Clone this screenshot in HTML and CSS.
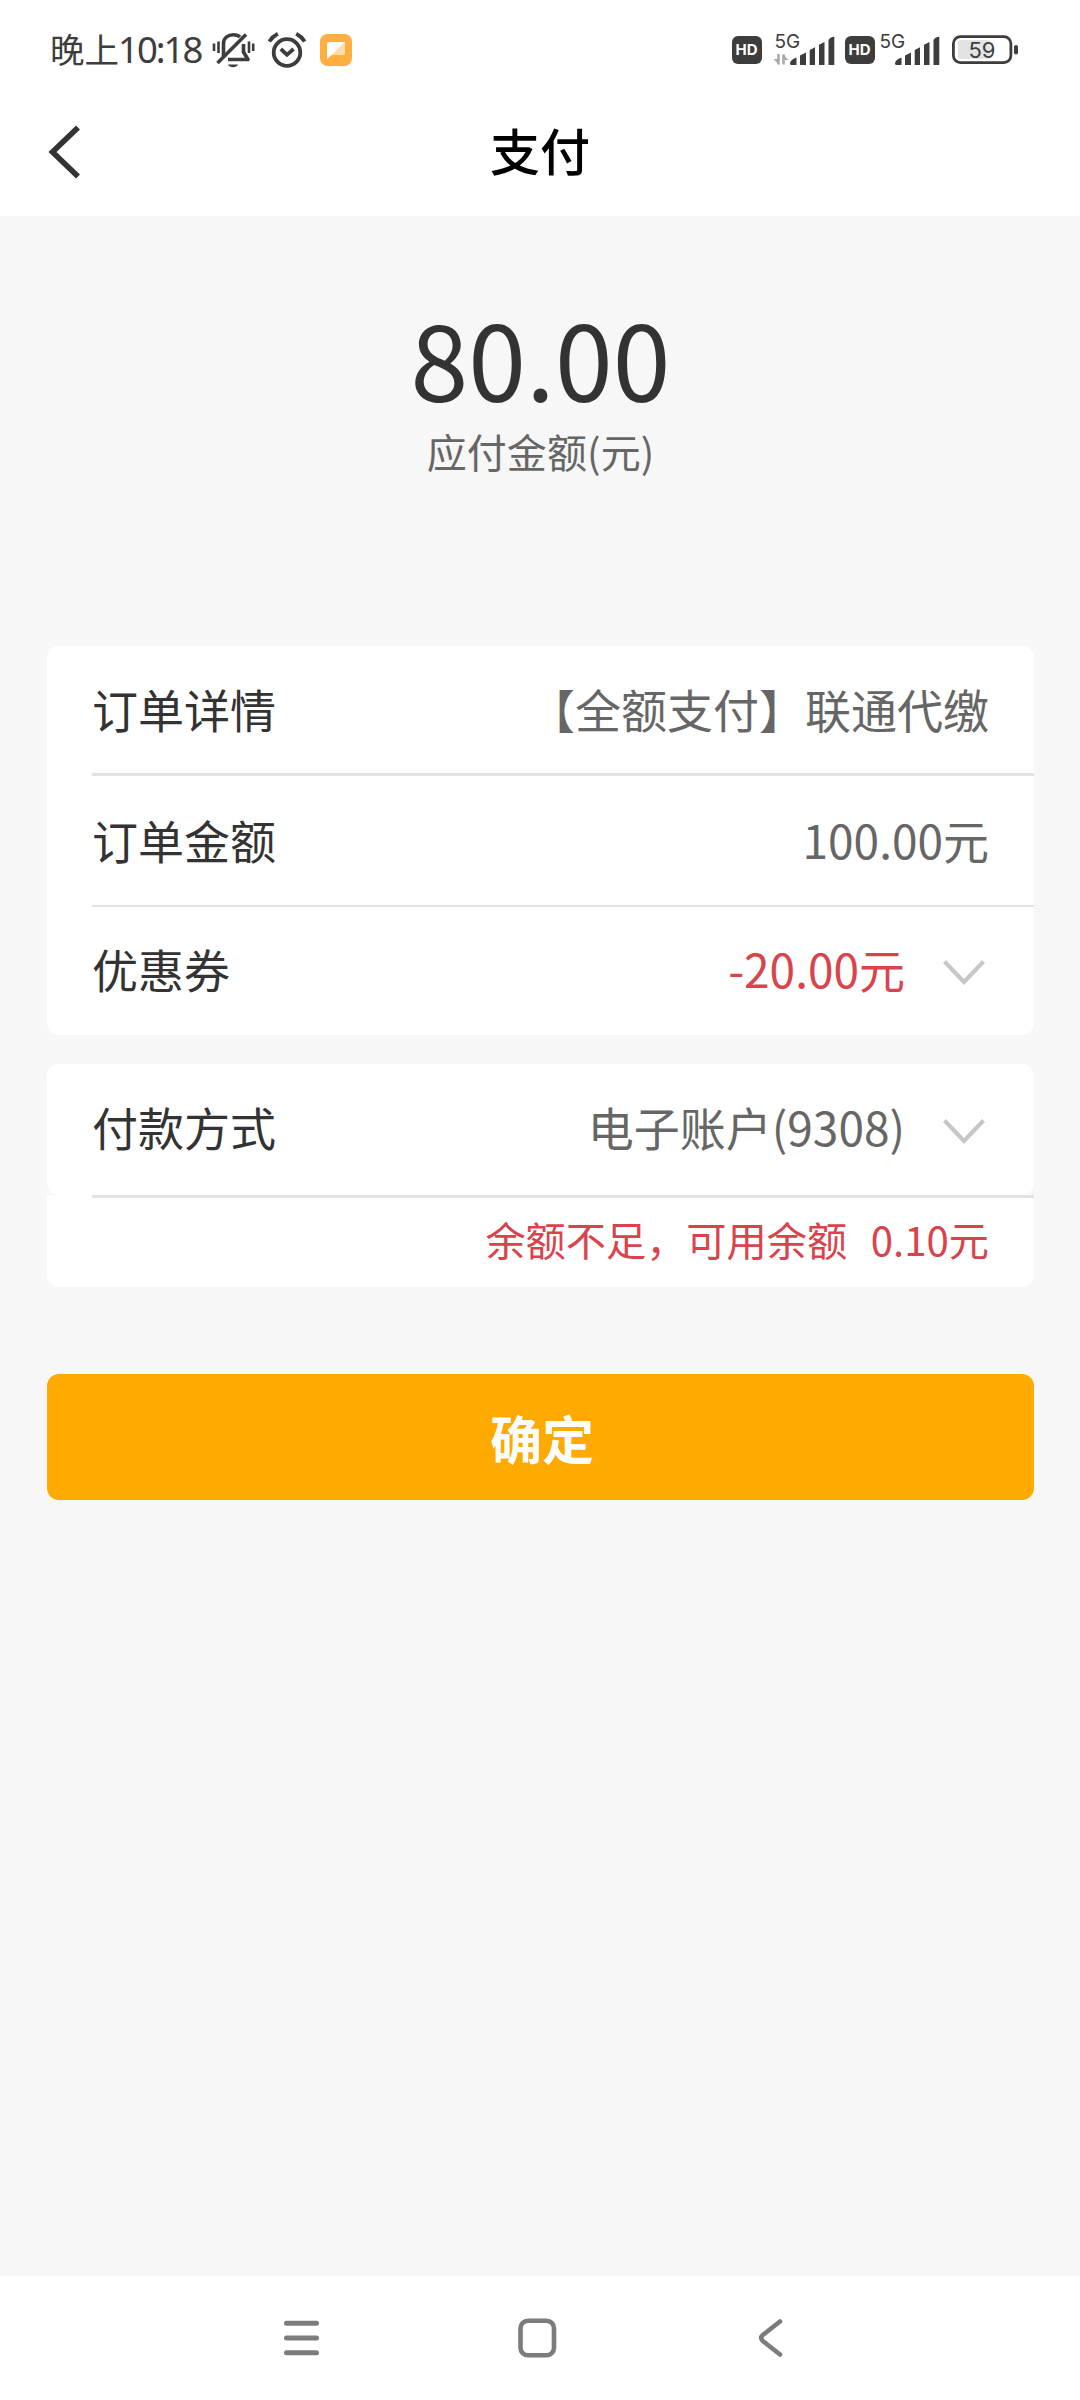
FILE: index.html
```html
<!DOCTYPE html>
<html lang="zh-CN">
<head>
<meta charset="utf-8">
<title>支付</title>
<link rel="stylesheet" href="styles.css">
</head>
<body>
<div class="screen">
  <div class="status">
    <span class="time">晚上<span class="digits">10:18</span></span>
    <svg class="bell" width="44" height="38" viewBox="0 0 44 38" fill="none" stroke="#3d3d3d" stroke-width="3.6">
      <path d="M11.5 25V13C11.5 7 16 3.700 21.500 3.700C24 3.700 26.500 4.500 28 6"/>
      <path d="M31.500 13V21L36 28.500H16" stroke-linejoin="round"/>
      <path d="M5.500 32L34 3.500"/>
      <path d="M2 12.500V20M6.500 10.500V22M37 10.500V22M41.200 12.500V20" stroke-width="2.600"/>
      <path d="M16 33.500H26C24.500 37 17.500 37 16 33.500Z" fill="#3d3d3d" stroke="none"/>
    </svg>
    <svg class="alarm" width="38" height="36" viewBox="0 0 38 36" fill="none" stroke="#3d3d3d" stroke-width="3.800">
      <circle cx="19" cy="20.500" r="13.300"/>
      <path d="M12.800 17L19 22.800L25.500 17"/>
      <path d="M1.300 9.500Q4.500 4.500 9.800 1.800M36.700 9.500Q33.500 4.500 28.200 1.800"/>
    </svg>
    <svg class="note" width="32" height="32" viewBox="0 0 32 32">
      <rect width="32" height="32" rx="7.500" fill="#ffaf3f"/>
      <path d="M7 10Q7 8 9 8H25V19Q25 21 23 21H12L7 25Z" fill="#ffdda8"/>
      <path d="M7 10Q7 8 9 8H25L7 25Z" fill="#fff"/>
    </svg>
    <div class="radio">
      <span class="hd">HD</span>
      <svg class="signal" width="62" height="36" viewBox="0 0 62 36" fill="#3d3d3d">
        <text x="1.500" y="15.500" class="net">5G</text>
        <path d="M5.500 22V32.500M10.500 32.500V22.500" stroke="#aaa" stroke-width="2.600" fill="none"/>
        <path d="M.500 27H5.500V32.500ZM10.500 22.500L15.500 28H10.500Z" fill="#aaa"/>
        <path d="M17 31.500Q17 28 23.500 25.500V33H18.500Q17 33 17 31.500ZM27 23.500L33 20.500V33H27ZM36.700 18L42 15.300V33H36.700ZM46 12.700L51.500 10V33H46ZM55.500 8Q57 5 61.300 4.800V33H55.500Z"/>
      </svg>
      <span class="hd hd-second">HD</span>
      <svg class="signal-second" width="62" height="36" viewBox="0 0 62 36" fill="#3d3d3d">
        <text x="1.500" y="15.500" class="net">5G</text>
        <path d="M17 31.500Q17 28 23.500 25.500V33H18.500Q17 33 17 31.500ZM27 23.500L33 20.500V33H27ZM36.700 18L42 15.300V33H36.700ZM46 12.700L51.500 10V33H46ZM55.500 8Q57 5 61.300 4.800V33H55.500Z"/>
      </svg>
      <svg width="67" height="30" viewBox="0 0 67 30">
        <rect x="6" y="5" width="32" height="19" rx="3" fill="#e3e3e3"/>
        <rect x="1.400" y="1.600" width="57.500" height="26" rx="7" fill="none" stroke="#3d3d3d" stroke-width="2.800"/>
        <rect x="62" y="10" width="4" height="9.500" rx="2" fill="#3d3d3d"/>
        <text x="30" y="22.700" class="charge">59</text>
      </svg>
    </div>
  </div>

  <header class="header">
    <svg width="34" height="50" viewBox="0 0 34 50" fill="none" stroke="#333" stroke-width="5.600">
      <path d="M30 .500L4.500 25L30 49.500"/>
    </svg>
    <h1 class="title">支付</h1>
    <span></span>
  </header>

  <main class="main">
    <div class="amount">80.00</div>
    <div class="caption">应付金额(元)</div>

    <section class="card order">
      <div class="row first"><span class="label">订单详情</span><span class="value">【全额支付】联通代缴</span></div>
      <div class="rule"></div>
      <div class="row second"><span class="label">订单金额</span><span class="value">100.00元</span></div>
      <div class="rule"></div>
      <div class="row third"><span class="label">优惠券</span><span class="value red">-20.00元</span>
        <svg class="down" width="42" height="26" viewBox="0 0 42 26" fill="none" stroke="#c6c6c6" stroke-width="4"><path d="M1.500 1.500L21 22L40.500 1.500"/></svg>
      </div>
    </section>

    <section class="pay">
      <div class="row method"><span class="label">付款方式</span><span class="value">电子账户(9308)</span>
        <svg class="down" width="42" height="26" viewBox="0 0 42 26" fill="none" stroke="#c6c6c6" stroke-width="4"><path d="M1.500 1.500L21 22L40.500 1.500"/></svg>
      </div>
      <div class="balance"><div class="rule"></div><p class="warn">余额不足，可用余额&nbsp; 0.10元</p></div>
    </section>

    <button class="confirm">确定</button>
  </main>

  <nav class="nav">
    <svg width="38" height="40" viewBox="0 0 38 40" stroke="#7c7c7c" stroke-width="5" stroke-linecap="round"><path d="M3.500 5.300H33.500M3.500 20H33.500M3.500 34.700H33.500"/></svg>
    <svg width="40" height="40" viewBox="0 0 40 40" fill="none" stroke="#7c7c7c" stroke-width="4.600"><rect x="1.500" y="2.800" width="33.500" height="34.400" rx="7.500"/></svg>
    <svg width="26" height="40" viewBox="0 0 26 40" fill="none" stroke="#7c7c7c" stroke-width="4.600" stroke-linecap="round"><path d="M22 3.500L4.800 17Q1.500 20 4.800 23L22 36.500"/></svg>
  </nav>
</div>
</body>
</html>
```
FILE: styles.css
```css
* { box-sizing: border-box; margin: 0; padding: 0; }
body { background: #f7f7f7; font-family: "Noto Sans CJK SC", sans-serif; color: #333; }
svg { display: block; flex: none; overflow: visible; }
.screen { width: 1080px; height: 2400px; display: flex; flex-direction: column; }

.status { height: 99px; background: #fff; display: flex; align-items: center; padding: 0 61px 0 50px; }
.time { width: 162px; font-size: 34.500px; line-height: 50px; color: #3d3d3d; white-space: nowrap; padding-bottom: 2px; }
.digits { font-family: "Noto Sans", sans-serif; font-size: 36.500px; letter-spacing: -2px; margin-left: -1px; }
.alarm { margin-left: 12px; }
.note { margin-left: 13.500px; }
.radio { margin-left: auto; display: flex; align-items: center; }
.hd { width: 30px; height: 28px; border-radius: 6px; background: #3d3d3d; color: #fff; font: bold 15px/28px "Inter", sans-serif; text-align: center; }
.signal { margin-left: 11px; }
.hd-second { margin-left: 10px; }
.signal-second { margin-left: 3.500px; }
.signal-second + svg { margin-left: 12px; }
.net { font: 19px "Inter", sans-serif; }
.charge { font: 400 22px "Inter", sans-serif; text-anchor: middle; fill: #3d3d3d; }

.header { height: 117px; background: #fff; display: grid; grid-template-columns: 1fr auto 1fr; padding: 0 48px; }
.header svg { margin-top: 28px; }
.title { font-size: 50px; line-height: 72px; font-weight: 500; color: #000; margin-top: 14px; }

.main { flex: 1; padding: 0 46px 0 47px; display: flex; flex-direction: column; }
.amount { font-size: 104px; line-height: 120px; margin-top: 81px; text-align: center; }
.caption { font-size: 40px; line-height: 60px; margin-top: 4px; text-align: center; color: #666; letter-spacing: .1px; }
.card { margin-top: 165px; }
.card, .method { background: #fff; border-radius: 12px; }
.row { display: flex; align-items: center; padding: 0 45px; font-size: 46px; line-height: 68px; }
.first { height: 127px; padding-bottom: 4px; }
.second { height: 129px; padding-bottom: 2px; }
.third { height: 128px; padding-bottom: 6px; }
.value { margin-left: auto; color: #666; }
.red, .warn { color: #d8434c; }
.down { margin-left: 38px; margin-right: 4px; margin-top: 10px; }
.rule { height: 2.500px; background: #e2e2e2; margin-left: 45px; }
.pay { margin-top: 29px; }
.method { height: 131px; padding-bottom: 8px; }
.method .down { margin-top: 13px; }
.balance { height: 92px; background: #fff; border-radius: 0 0 12px 12px; }
.warn { font-size: 40.200px; line-height: 60px; text-align: right; padding: 11px 45px 0 0; word-spacing: 2.800px; }
.confirm { margin-top: 86.500px; height: 126px; border: 0; border-radius: 12px; background: #ffaa00; color: #fff; font: bold 52px/76px "Noto Sans CJK SC", sans-serif; padding: 3px 0 0 3px; }

.nav { height: 124px; background: #fff; display: flex; justify-content: space-between; padding: 42px 296px 0 282.500px; }
```
